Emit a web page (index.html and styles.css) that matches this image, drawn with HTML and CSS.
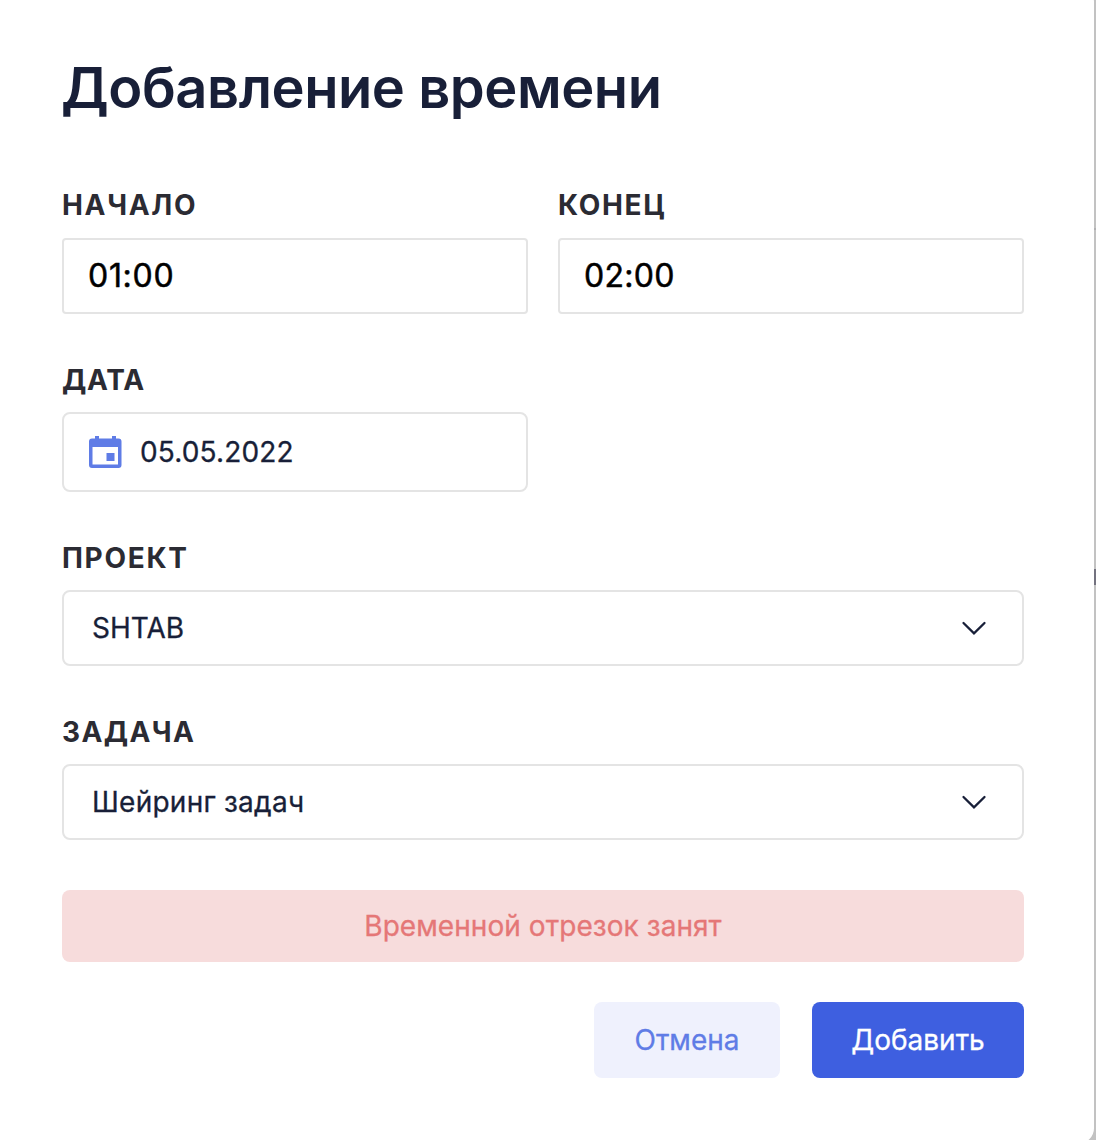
FILE: index.html
```html
<!DOCTYPE html>
<html lang="ru">
<head>
<meta charset="utf-8">
<title>Добавление времени</title>
<link rel="stylesheet" href="styles.css">
</head>
<body>
<div class="backdrop">
  <form class="modal">
    <h1 class="title">Добавление времени</h1>
    <div class="row">
      <div class="field">
        <span class="label">НАЧАЛО</span>
        <div class="box time time-start">01:00</div>
      </div>
      <div class="field">
        <span class="label">КОНЕЦ</span>
        <div class="box time">02:00</div>
      </div>
    </div>
    <div class="field field-date">
      <span class="label">ДАТА</span>
      <div class="box date">
        <svg class="calendar" width="34" height="34" viewBox="0 0 34 34">
          <path fill="#5f7ce6" fill-rule="evenodd" d="M7 1h4v2.500h13V1h4v2.500h2.500a3 3 0 0 1 3 3V30a3 3 0 0 1-3 3H4a3 3 0 0 1-3-3V6.500a3 3 0 0 1 3-3h3zM4.500 12v17.500H30V12zM18.500 18h8v8h-8z"/>
        </svg>
        <span class="date-text">05.05.2022</span>
      </div>
    </div>
    <div class="field field-project">
      <span class="label">ПРОЕКТ</span>
      <div class="box select">
        <span class="select-project">SHTAB</span>
        <svg class="chevron" width="26" height="16" viewBox="0 0 26 16"><path d="M2.500 3 13 13.300 23.500 3" fill="none" stroke="#181f38" stroke-width="2.300" stroke-linecap="round"/></svg>
      </div>
    </div>
    <div class="field field-task">
      <span class="label">ЗАДАЧА</span>
      <div class="box select">
        <span class="select-task">Шейринг задач</span>
        <svg class="chevron" width="26" height="16" viewBox="0 0 26 16"><path d="M2.500 3 13 13.300 23.500 3" fill="none" stroke="#181f38" stroke-width="2.300" stroke-linecap="round"/></svg>
      </div>
    </div>
    <div class="error"><span>Временной отрезок занят</span></div>
    <div class="actions">
      <button class="btn cancel" type="button">Отмена</button>
      <button class="btn submit" type="button">Добавить</button>
    </div>
  </form>
  <div class="page-edge">
    <i class="edge-line"></i>
    <i class="edge-mark"></i>
  </div>
</div>
</body>
</html>
```

FILE: styles.css
```css
* { box-sizing: border-box; }
body {
  margin: 0;
  font-family: Inter, "Liberation Sans", sans-serif;
  color: #181f38;
}
.backdrop {
  display: flex;
  height: 1140px;
  overflow: hidden;
  background: #c2c2c2;
}
.modal {
  flex: none;
  width: 1094px;
  height: 1158px;
  margin-top: -14px;
  padding: 66px 70px 0 62px;
  background: #fff;
  border-radius: 0 16px 16px 0;
}
.title {
  margin: 0 0 0 -1px;
  height: 72px;
  line-height: 72px;
  font-size: 56px;
  font-weight: 600;
  letter-spacing: -0.45px;
  white-space: nowrap;
}
.row {
  display: grid;
  grid-template-columns: 1fr 1fr;
  gap: 30px;
  margin-top: 64px;
}
.label {
  display: block;
  height: 34px;
  margin-bottom: 16px;
  line-height: 34px;
  font-size: 28px;
  font-weight: 700;
  letter-spacing: 1.7px;
  color: #2b2b33;
}
.box, .error, .btn { -webkit-text-stroke: 0.3px currentColor; }
.box {
  display: flex;
  align-items: center;
  height: 76px;
  border: 2px solid #e4e4e4;
  border-radius: 8px;
  font-size: 28px;
}
.time {
  padding: 0 0 1px 24px;
  border-radius: 4px;
  font-size: 32px;
  letter-spacing: 0.3px;
  color: #000;
  -webkit-text-stroke-width: 0.5px;
}
.time-start { letter-spacing: 0.7px; }
.field-date { width: 466px; margin-top: 49px; }
.field-date .label { margin-bottom: 15px; letter-spacing: 0.8px; }
.date { height: 80px; padding-left: 24px; gap: 18px; }
.date-text { letter-spacing: 0.15px; }
.field-project { margin-top: 49px; }
.field-project .label { margin-bottom: 15px; }
.field-task { margin-top: 49px; }
.field-task .label { margin-bottom: 15px; letter-spacing: 1.4px; }
.select { justify-content: space-between; padding: 0 35px 0 28px; }
.select-task { letter-spacing: 0.25px; }
.error {
  display: flex;
  align-items: center;
  justify-content: center;
  height: 72px;
  margin-top: 50px;
  border-radius: 8px;
  background: #f7dcdc;
  color: #e57777;
  font-size: 28px;
  letter-spacing: 0.06px;
}
.actions {
  display: flex;
  justify-content: flex-end;
  gap: 32px;
  margin-top: 40px;
}
.btn {
  height: 76px;
  padding: 0;
  border: 0;
  border-radius: 8px;
  font: 400 28px Inter, sans-serif;
}
.cancel { width: 186px; background: #eff1fd; color: #5f7ce6; }
.submit { width: 212px; background: #3e5fe0; color: #fff; }
.page-edge {
  display: flex;
  flex-direction: column;
  width: 2px;
}
.edge-line { height: 2px; margin-top: 228px; background: #b0b0b2; }
.edge-mark { height: 16px; margin-top: 339px; background: #73727f; }
```
